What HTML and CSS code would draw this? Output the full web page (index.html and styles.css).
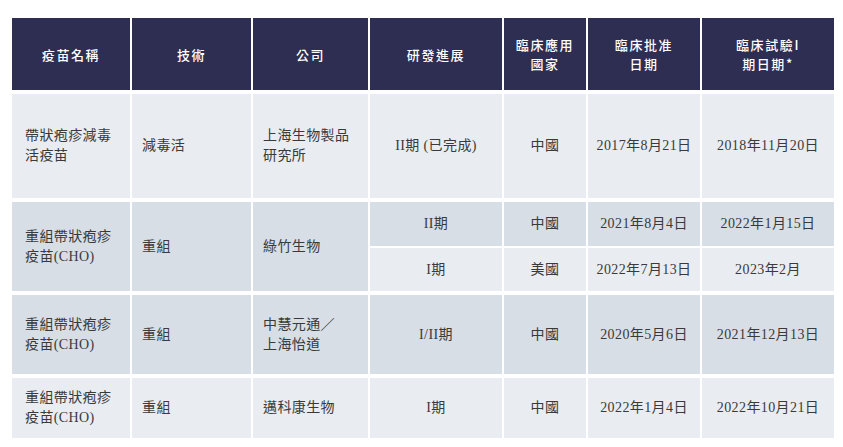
FILE: index.html
```html
<!DOCTYPE html>
<html lang="zh-Hant">
<head>
<meta charset="utf-8">
<title>疫苗</title>
<link rel="stylesheet" href="styles.css">
</head>
<body>
<table class="vt">
  <colgroup>
    <col class="c1"><col class="c2"><col class="c3"><col class="c4"><col class="c5"><col class="c6"><col class="c7">
  </colgroup>
  <thead>
    <tr class="h">
      <th>疫苗名稱</th>
      <th>技術</th>
      <th>公司</th>
      <th>研發進展</th>
      <th>臨床應用<br>國家</th>
      <th>臨床批准<br>日期</th>
      <th>臨床試驗I<br>期日期*</th>
    </tr>
  </thead>
  <tbody>
    <tr class="r1 light">
      <td class="l first">帶狀疱疹減毒<br>活疫苗</td>
      <td class="l">減毒活</td>
      <td class="l">上海生物製品<br>研究所</td>
      <td>II期 (已完成)</td>
      <td>中國</td>
      <td>2017年8月21日</td>
      <td>2018年11月20日</td>
    </tr>
    <tr class="r2a dark">
      <td class="l first" rowspan="2">重組帶狀疱疹<br>疫苗(CHO)</td>
      <td class="l" rowspan="2">重組</td>
      <td class="l" rowspan="2">綠竹生物</td>
      <td>II期</td>
      <td>中國</td>
      <td>2021年8月4日</td>
      <td>2022年1月15日</td>
    </tr>
    <tr class="r2b light sub">
      <td>I期</td>
      <td>美國</td>
      <td>2022年7月13日</td>
      <td>2023年2月</td>
    </tr>
    <tr class="r3 dark">
      <td class="l first">重組帶狀疱疹<br>疫苗(CHO)</td>
      <td class="l">重組</td>
      <td class="l">中慧元通／<br>上海怡道</td>
      <td>I/II期</td>
      <td>中國</td>
      <td>2020年5月6日</td>
      <td>2021年12月13日</td>
    </tr>
    <tr class="r4 light">
      <td class="l first">重組帶狀疱疹<br>疫苗(CHO)</td>
      <td class="l">重組</td>
      <td class="l">邁科康生物</td>
      <td>I期</td>
      <td>中國</td>
      <td>2022年1月4日</td>
      <td>2022年10月21日</td>
    </tr>
  </tbody>
</table>
</body>
</html>
```

FILE: styles.css
```css
html, body {
  margin: 0;
  padding: 0;
  background: #ffffff;
}

.vt {
  margin: 18px 0 0 10px;
  border-collapse: separate;
  border-spacing: 2px 0;
  table-layout: fixed;
  width: 826px;
}

.c1 { width: 118px; }
.c2 { width: 119px; }
.c3 { width: 115px; }
.c4 { width: 132px; }
.c5 { width: 82px; }
.c6 { width: 112px; }
.c7 { width: 132px; }

.vt th {
  background: #2e2d52;
  color: #ffffff;
  font-family: "Noto Sans CJK TC", "Noto Sans", sans-serif;
  font-weight: 500;
  font-size: 13px;
  letter-spacing: 1.6px;
  line-height: 19px;
  text-align: center;
  vertical-align: middle;
  padding: 0 4px;
}

.h { height: 72px; }

.vt td {
  font-family: "Liberation Serif", "Noto Sans CJK TC", serif;
  font-size: 14px;
  letter-spacing: 0.4px;
  line-height: 20px;
  color: #3a3a3a;
  text-align: center;
  vertical-align: middle;
  padding: 0 2px;
  border-top: 4px solid #ffffff;
}

.vt td.l {
  text-align: left;
  padding-left: 10px;
}

.vt td.l.first {
  padding-left: 13px;
}

.light td { background: #e9ecf0; }
.dark td { background: #d7dee5; }

.vt tr.sub td {
  border-top: 2px solid #ffffff;
}

.r1 { height: 108px; }
.r2a { height: 48px; }
.r2b { height: 45px; }
.r3 { height: 83px; }
.r4 { height: 64px; }
```
